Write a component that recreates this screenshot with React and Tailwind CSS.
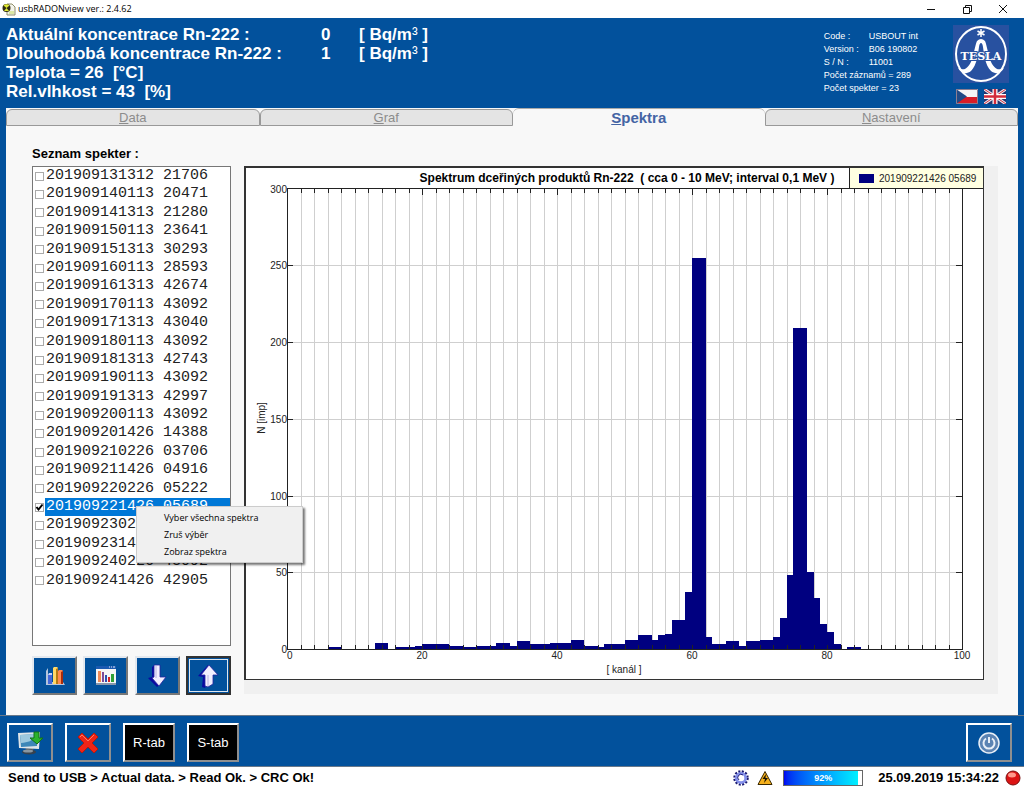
const spectra = [
  '201909131312 21706', '201909140113 20471', '201909141313 21280', '201909150113 23641',
  '201909151313 30293', '201909160113 28593', '201909161313 42674', '201909170113 43092',
  '201909171313 43040', '201909180113 43092', '201909181313 42743', '201909190113 43092',
  '201909191313 42997', '201909200113 43092', '201909201426 14388', '201909210226 03706',
  '201909211426 04916', '201909220226 05222', '201909221426 05689', '201909230226 42892',
  '201909231426 43092', '201909240226 43092', '201909241426 42905',
];

const tabs = [
  { key: 'D', rest: 'ata' },
  { key: 'G', rest: 'raf' },
  { key: 'S', rest: 'pektra', active: true },
  { key: 'N', rest: 'astavení' },
];

const menuItems = ['Vyber všechna spektra', 'Zruš výběr', 'Zobraz spektra'];

// [first channel, channel after the last, count]
const bars = [
  [6, 8, 1], [13, 15, 4], [16, 19, 1], [19, 20, 2], [20, 24, 3], [24, 26, 2], [26, 28, 1],
  [28, 31, 2], [31, 33, 4], [33, 34, 2], [34, 36, 5], [36, 39, 3], [39, 42, 4], [42, 44, 6],
  [44, 46, 2], [46, 47, 1], [47, 50, 3], [50, 52, 6], [52, 54, 9], [54, 55, 6], [55, 56, 9],
  [56, 57, 10], [57, 59, 19], [59, 60, 37], [60, 62, 255], [62, 63, 8], [63, 65, 3], [65, 67, 5],
  [67, 68, 2], [68, 70, 5], [70, 72, 6], [72, 73, 8], [73, 74, 20], [74, 75, 48], [75, 77, 209],
  [77, 78, 50], [78, 79, 33], [79, 80, 16], [80, 81, 11], [81, 82, 3], [83, 85, 1],
];

const px = (c) => Math.round(41 + c * 6.75);
const py = (n) => Math.round(481 - n * 1.535);

function SpectrumChart() {
  const channels = Array.from({ length: 49 }, (_, i) => (i + 1) * 2);
  const counts = [50, 100, 150, 200, 250];
  return (
    <svg viewBox="0 0 737 511" className="block h-auto w-full font-['Liberation_Sans',sans-serif]">
      <g stroke="#cfcfcf" shapeRendering="crispEdges">
        {channels.map((c) => <line key={c} x1={px(c) + 0.5} x2={px(c) + 0.5} y1="21" y2="481" />)}
        {counts.map((n) => <line key={n} x1="42" x2="716" y1={py(n) + 0.5} y2={py(n) + 0.5} />)}
      </g>
      <g fill="#000080" shapeRendering="crispEdges">
        {bars.map(([from, to, n]) => (
          <rect key={from} x={px(from)} y={py(n)} width={px(to) - px(from)} height={481 - py(n)} />
        ))}
      </g>
      <g stroke="#222" fill="none" shapeRendering="crispEdges">
        <rect x="41.5" y="20.5" width="675" height="461" />
        {channels.map((c) => (
          <path key={c} d={`M${px(c) + 0.5} 21v${c % 20 ? 4 : 6}M${px(c) + 0.5} 481v-4`} />
        ))}
        {counts.map((n) => <path key={n} d={`M42 ${py(n) + 0.5}h5M716 ${py(n) + 0.5}h-6`} />)}
      </g>
      <g fontSize="10" fill="#222">
        {[0, ...counts, 300].map((n) => (
          <text key={n} x="41" y={py(n) + 4} textAnchor="end">{n}</text>
        ))}
        <text x="41" y="491">0</text>
        {[20, 40, 60, 80, 100].map((c) => (
          <text key={c} x={px(c)} y="491" textAnchor="middle">{c}</text>
        ))}
        <text x="378" y="505" textAnchor="middle">[ kanál ]</text>
        <text transform="translate(19 250) rotate(-90)" textAnchor="middle">N [imp]</text>
      </g>
      <text x="381" y="14" textAnchor="middle" fontSize="12" fontWeight="bold" className="whitespace-pre">
        {'Spektrum dceřiných produktů Rn-222  ( cca 0 - 10 MeV; interval 0,1 MeV )'}
      </text>
      <rect x="603.5" y="-0.5" width="134" height="21" fill="#ffffe1" stroke="#222" shapeRendering="crispEdges" />
      <rect x="613" y="6" width="15" height="9" fill="#000080" />
      <text x="633" y="14" fontSize="10" fill="#222">201909221426 05689</text>
    </svg>
  );
}

function AppIcon() {
  return (
    <svg viewBox="0 0 14 14" className="size-3.5">
      <path d="M5 2h5l3 3v8H5z" fill="#f4f4ec" stroke="#8f8f6b" />
      <circle cx="4.5" cy="6" r="4" fill="#302d14" />
      <path d="M4.500 6 1.500 3.500A4 4 0 0 1 7.500 3.500zM4.500 6 2 9h5z" fill="#dfe832" />
      <path d="M7 9h5v3H7z" fill="#dce8a4" />
    </svg>
  );
}

function TeslaLogo() {
  return (
    <svg viewBox="0 0 56 58" className="h-[58px] w-14">
      <path fill="#2851a0" d="M0 0h56v58H0z" />
      <path
        d="M5 43c7 4 12-1 15-12 2-8 3-13 4-15q4-4 8 0c1 2 2 7 4 15 3 11 8 16 15 12-3 5-8 7-13 3-6-6-7-17-8-24-.5-3-1-4-2-4s-1.500 1-2 4c-1 7-2 18-8 24-5 4-10 2-13-3z"
        fill="#fff"
      />
      <ellipse cx="28" cy="29" rx="25" ry="27" fill="none" stroke="#fff" strokeWidth="2" />
      <path d="M28 4v8M24.500 6l7 4M31.500 6l-7 4" stroke="#fff" strokeWidth="1.5" />
      <text
        x="28" y="35" textAnchor="middle" fontSize="11" fontWeight="bold" fill="#fff"
        stroke="#2851a0" strokeWidth="2" paintOrder="stroke" className="font-['DejaVu_Serif',serif]"
      >
        TESLA
      </text>
    </svg>
  );
}

function CzechFlag() {
  return (
    <svg viewBox="0 0 22 15" className="h-[15px] w-[22px]">
      <path d="M0 0h22v8H0z" fill="#f5f5f5" />
      <path d="M0 8h22v7H0z" fill="#d81d27" />
      <path d="m0 0 11 7.500L0 15z" fill="#204a86" />
      <path d="M.5.5h21v14H.5z" fill="none" stroke="#8c7d90" />
    </svg>
  );
}

function BritishFlag() {
  return (
    <svg viewBox="0 0 22 15" className="h-[15px] w-[22px]">
      <path d="M0 0h22v15H0z" fill="#27346e" />
      <path d="m0 0 22 15M22 0 0 15" stroke="#e8e8f0" strokeWidth="3" />
      <path d="m0 0 22 15M22 0 0 15" stroke="#d32c3b" />
      <path d="M11 0v15M0 7.500h22" stroke="#fff" strokeWidth="5" />
      <path d="M11 0v15M0 7.500h22" stroke="#d32c3b" strokeWidth="2.5" />
    </svg>
  );
}

function BarsIcon() {
  return (
    <svg viewBox="0 0 20 20" className="size-5">
      <path d="M1 5 3 2v14h15l2 3H1z" fill="#b4c4dc" />
      <path d="M3 9h4v9H3z" fill="#4468d8" />
      <path d="m3 9 1-2h3v2z" fill="#c5d2ff" />
      <path d="M8 2h5v16H8z" fill="#b97a12" />
      <path d="m8 2 1-1h3l1 1-2 1v15H8z" fill="#ffd968" />
      <path d="M13 5h5v13h-5z" fill="#a92c0c" />
      <path d="m13 5 1-1h3l1 1-2 1v12h-3z" fill="#ff8a50" />
    </svg>
  );
}

function ChartWindowIcon() {
  return (
    <svg viewBox="0 0 20 19" className="h-[19px] w-5">
      <path d="M0 0h20v18H0z" fill="#f5f5f5" />
      <path d="M0 0h20v3H0z" fill="#1c5ab0" />
      <path d="M13 1h1M15 1h1M17 1h2" stroke="#dfe8f8" />
      <path d="M0 17h20v2H0z" fill="#8796ac" />
      <path d="M2 5h3v11H2z" fill="#f08a56" />
      <path d="M6 6h2v10H6z" fill="#7f4a96" />
      <path d="M9 9h2v7H9z" fill="#2d50b0" />
      <path d="M12 11h2v5h-2z" fill="#d42424" />
      <path d="M15 8h3v8h-3z" fill="#2fa036" />
    </svg>
  );
}

function ArrowDownIcon() {
  return (
    <svg viewBox="0 0 20 24" className="h-6 w-5">
      <path d="M8 1 5 3v10l-4 1 9 9 4-3z" fill="#0a0aa0" />
      <path d="M7 1h6v12h6l-7 9-7-8 2-1z" fill="#f3efff" stroke="#2424a0" strokeWidth=".8" />
      <path d="M9 2v12" stroke="#b9b4e0" />
    </svg>
  );
}

function ArrowUpIcon() {
  return (
    <svg viewBox="0 0 22 24" className="h-6 w-[22px]">
      <path d="M11 1 1 12l5 1-1 10 3 1 6-12z" fill="#0a0aa0" />
      <path d="m12 1 9 10h-5v9l-5 3-3-1V11H4z" fill="#f3efff" stroke="#2424a0" strokeWidth=".8" />
      <path d="M11 11v11" stroke="#b9b4e0" />
    </svg>
  );
}

function MonitorIcon() {
  return (
    <svg viewBox="0 0 28 28" className="size-7">
      <path d="M10 19h7l1 4H9z" fill="#59656e" />
      <ellipse cx="13" cy="23" rx="7" ry="2.5" fill="#37424e" />
      <ellipse cx="12" cy="22" rx="5" ry="1.5" fill="#8a97a2" />
      <path d="m2 4 22-1-1 17-20-1z" fill="#dfe5e8" />
      <path d="m4 6 18-1-1 12-16 1z" fill="#3d87b8" />
      <path d="m4 6 15-1c-2 8-7 8-14 9z" fill="#9cc8de" />
      <path d="M18 3h5v6h4l-6 6-7-6h4z" fill="#2bb32b" stroke="#13701a" />
    </svg>
  );
}

function CrossIcon() {
  return (
    <svg viewBox="0 0 22 22" className="size-[22px]">
      <path
        d="m5 1 6 6 6-6 4 4-6 6 6 6-4 4-6-6-6 6-4-4 6-6-6-6z"
        fill="#ef2418" stroke="#b3180f" strokeLinejoin="round"
      />
      <path d="m3 5 2-2 6 6 6-6" fill="none" stroke="#ff7a60" />
    </svg>
  );
}

function PowerIcon() {
  return (
    <svg viewBox="0 0 22 22" className="size-[22px]" fill="none" stroke="#e9eff7">
      <circle cx="11" cy="11" r="10" fill="#5b83b3" strokeWidth="1.5" />
      <path d="M8 6.500a5.500 5.500 0 1 0 6 0M11 5v6" strokeWidth="2" />
    </svg>
  );
}

function GearIcon() {
  return (
    <svg viewBox="0 0 16 16" className="size-4">
      <circle cx="8" cy="8" r="6.5" fill="none" stroke="#191970" strokeWidth="2.5" strokeDasharray="2 1.400" />
      <circle cx="8" cy="8" r="4.7" fill="#fff" stroke="#8490ea" strokeWidth="2.8" />
      <path d="M6 10a3 3 0 0 1 4-5" fill="none" stroke="#22227c" />
    </svg>
  );
}

function WarningIcon() {
  return (
    <svg viewBox="0 0 16 16" className="size-4">
      <path d="M8 1.500 15 14.500H1z" fill="#f5b01c" stroke="#3a2800" strokeLinejoin="round" />
      <path d="M9 4 5.500 9H8l-1 4 4-5H8.500z" fill="#1c1400" />
    </svg>
  );
}

function RecordIcon() {
  return (
    <svg viewBox="0 0 16 16" className="size-4">
      <circle cx="8" cy="8" r="7" fill="#dc1414" stroke="#7a1010" />
      <ellipse cx="7" cy="5" rx="4" ry="2.5" fill="#ff9a8c" />
    </svg>
  );
}

function ToolButton({ label, focused, children }) {
  return (
    <button
      type="button"
      aria-label={label}
      className={`flex h-[39px] w-[45px] items-center justify-center border-2 bg-[#02519c] ${
        focused
          ? 'border-[#333] outline-1 -outline-offset-4 outline-[#dfe6ee]'
          : 'border-t-[#e4e8ee] border-r-[#777] border-b-[#777] border-l-[#e4e8ee]'
      }`}
    >
      {children}
    </button>
  );
}

function BarButton({ label, wide, children }) {
  return (
    <button
      type="button"
      aria-label={label}
      className={`flex h-[39px] items-center justify-center border-2 border-t-white border-r-[#8f8f8f] border-b-[#8f8f8f] border-l-white text-[13px] text-white ${
        wide ? 'w-[52px] bg-black' : 'w-[46px]'
      }`}
    >
      {children}
    </button>
  );
}

function SpectraList() {
  return (
    <div className="relative mt-1 h-[480px] border border-[#777] bg-white">
      <ul className="grid h-[423px] auto-rows-fr">
        {spectra.map((name, i) => (
          <li key={name}>
            <label className="flex h-full items-center pl-0.5">
              <span className="peer grid size-[9px] shrink-0">
                <input
                  type="checkbox"
                  defaultChecked={i === 18}
                  className="peer col-start-1 row-start-1 size-[9px] appearance-none border border-[#aaa] bg-white"
                />
                <svg viewBox="0 0 9 9" className="invisible z-0 col-start-1 row-start-1 size-[9px] peer-checked:visible">
                  <path d="m1.500 4 2 2.500 4-5" fill="none" stroke="#000" strokeWidth="2" />
                </svg>
              </span>
              <span className="ml-px h-full flex-1 pl-px font-['Liberation_Mono',monospace] text-[15px] leading-[17px] whitespace-pre text-[#222] peer-has-checked:bg-[#0078d7] peer-has-checked:text-white">
                {name}
              </span>
            </label>
          </li>
        ))}
      </ul>
      <div
        role="menu"
        className="absolute top-[339px] left-[103px] z-10 flex w-[167px] flex-col border border-[#ccc] bg-[#f0f0f0] py-0.5 font-['Open_Sans',sans-serif] text-[9px] leading-[17px] shadow-[2px_2px_2px_#0008]"
      >
        {menuItems.map((item) => (
          <button key={item} type="button" role="menuitem" className="pl-[27px] text-left">{item}</button>
        ))}
      </div>
    </div>
  );
}

export default function App() {
  return (
    <div className="flex min-h-screen flex-col bg-[#02519c] font-['Liberation_Sans',Arial,sans-serif] text-black">
      <header className="flex h-[18px] items-center bg-white pr-4 pl-0.5">
        <AppIcon />
        <h1 className="ml-0.5 flex-1 font-['Open_Sans',sans-serif] text-[9px] leading-4">usbRADONview ver.: 2.4.62</h1>
        <div className="flex gap-[26px]">
          <button type="button" aria-label="Minimize">
            <svg viewBox="0 0 10 10" className="size-2.5" stroke="#111"><path d="M1 5.500h8" /></svg>
          </button>
          <button type="button" aria-label="Restore">
            <svg viewBox="0 0 10 10" className="size-2.5" stroke="#111" fill="none">
              <path d="M1.500 3.500h6v6h-6zM3.500 3.500v-2h6v6h-2" />
            </svg>
          </button>
          <button type="button" aria-label="Close">
            <svg viewBox="0 0 10 10" className="size-2.5" stroke="#111"><path d="m1 1 8 8M9 1 1 9" /></svg>
          </button>
        </div>
      </header>

      <section className="flex h-[90px] justify-between pr-[15px] pl-1.5 text-white">
        <div className="pt-[7px] text-[17px] leading-[19px] font-bold whitespace-pre">
          <div className="grid grid-cols-[315px_38px_auto]">
            <span>Aktuální koncentrace Rn-222 :</span>
            <span>0</span>
            <span>[ Bq/m<span className="font-normal">³</span> ]</span>
            <span>Dlouhodobá koncentrace Rn-222 :</span>
            <span>1</span>
            <span>[ Bq/m<span className="font-normal">³</span> ]</span>
          </div>
          <p>{'Teplota = 26  [°C]'}</p>
          <p>{'Rel.vlhkost = 43  [%]'}</p>
        </div>
        <div className="flex gap-[35px]">
          <div className="pt-3 text-[9px] leading-[13px]">
            <div className="grid grid-cols-[45px_auto]">
              <span>Code :</span><span>USBOUT int</span>
              <span>Version :</span><span>B06 190802</span>
              <span>S / N :</span><span>11001</span>
            </div>
            <p>Počet záznamů = 289</p>
            <p>Počet spekter = 23</p>
          </div>
          <div className="flex flex-col items-center gap-1.5 pt-[7px]">
            <TeslaLogo />
            <div className="flex gap-1.5">
              <button type="button" aria-label="Čeština"><CzechFlag /></button>
              <button type="button" aria-label="English"><BritishFlag /></button>
            </div>
          </div>
        </div>
      </section>

      <main className="mx-1.5 flex flex-1 flex-col bg-[#f8f8f8]">
        <nav className="flex" role="tablist">
          {tabs.map((tab) => (
            <button
              key={tab.key}
              type="button"
              role="tab"
              aria-selected={Boolean(tab.active)}
              className={tab.active
                ? 'h-[18px] flex-1 rounded-t-md border-t border-[#aaa] text-[15px] leading-[18px] font-bold text-[#4464a4]'
                : 'mt-px h-[17px] flex-1 rounded-t-md border border-[#999] bg-[#e4e4e4] text-[13px] leading-4 text-[#8c8c8c]'}
            >
              <u>{tab.key}</u>{tab.rest}
            </button>
          ))}
        </nav>

        <div className="flex flex-1 items-start pr-5 pb-5 pl-[26px]">
          <section className="w-[199px] shrink-0 pt-5">
            <h2 className="text-[13px] leading-4 font-bold">Seznam spekter :</h2>
            <SpectraList />
            <div className="mt-2.5 flex justify-between">
              <ToolButton label="Sloupcový graf"><BarsIcon /></ToolButton>
              <ToolButton label="Okno grafu"><ChartWindowIcon /></ToolButton>
              <ToolButton label="Dolů"><ArrowDownIcon /></ToolButton>
              <ToolButton label="Nahoru" focused><ArrowUpIcon /></ToolButton>
            </div>
          </section>
          <section className="mt-10 ml-[13px] flex-1 bg-[#f0f0f0] pr-3.5 pb-3.5">
            <div className="border-t-2 border-r border-b border-l-2 border-[#333] bg-white">
              <SpectrumChart />
            </div>
          </section>
        </div>
      </main>

      <section className="flex h-[52px] justify-between border-y border-[#68788a] pt-[7px] pr-3 pl-[7px]">
        <div className="flex gap-3">
          <BarButton label="Načíst data"><MonitorIcon /></BarButton>
          <BarButton label="Smazat"><CrossIcon /></BarButton>
          <BarButton wide>R-tab</BarButton>
          <BarButton wide>S-tab</BarButton>
        </div>
        <BarButton label="Konec"><PowerIcon /></BarButton>
      </section>

      <footer className="flex h-[19px] items-center bg-white pt-0.5 pr-[3px] pl-2 text-[13px] leading-[17px] font-bold">
        <p className="flex-1">Send to USB &gt; Actual data. &gt; Read Ok. &gt; CRC Ok!</p>
        <GearIcon />
        <span className="ml-2"><WarningIcon /></span>
        <div
          role="progressbar"
          aria-valuenow={92}
          className="mr-[15px] ml-2.5 grid h-4 w-20 border border-[#666] bg-white text-center text-[9px] leading-[14px] text-white"
        >
          <span className="col-start-1 row-start-1 bg-linear-to-r from-[#0000f0] to-[#00f0ff]" style={{ width: '95%' }} />
          <span className="col-start-1 row-start-1">92%</span>
        </div>
        <time className="mr-1.5">25.09.2019 15:34:22</time>
        <RecordIcon />
      </footer>
    </div>
  );
}
